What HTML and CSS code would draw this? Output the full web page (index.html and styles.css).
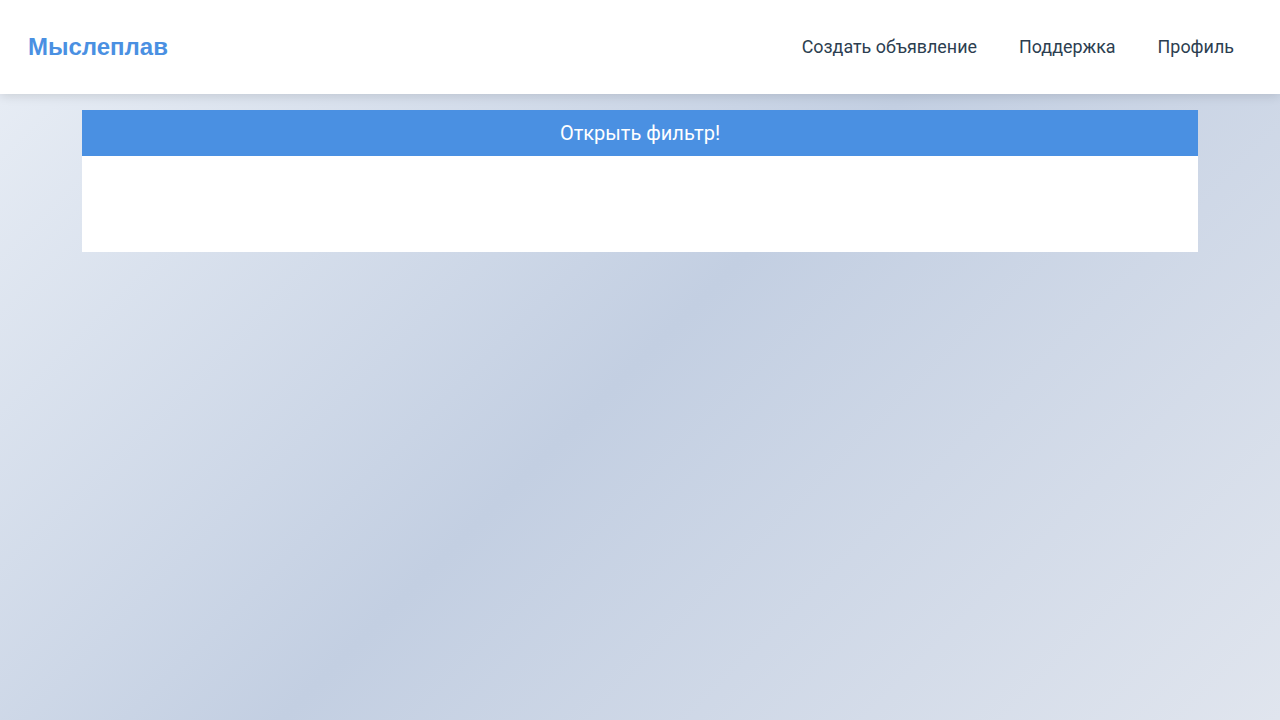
FILE: index.html
```html
<!DOCTYPE html>
<html lang="ru">
<head>
<meta charset="utf-8">
<title>Мыслеплав</title>
<link rel="stylesheet" href="styles.css">
</head>
<body>
<header class="header">
  <a class="logo" href="#">Мыслеплав</a>
  <nav class="nav">
    <a class="nav-link" href="#">Создать объявление</a>
    <a class="nav-link" href="#">Поддержка</a>
    <a class="nav-link" href="#">Профиль</a>
  </nav>
</header>
<main class="main">
  <section class="filter">
    <button class="filter-toggle" type="button">Открыть фильтр!</button>
    <div class="filter-body"></div>
  </section>
</main>
</body>
</html>
```
FILE: styles.css
```css
* { box-sizing: border-box; }
html, body { height: 100%; }
body {
  margin: 0;
  font-family: Roboto, "Noto Sans", sans-serif;
  background: linear-gradient(135deg, #eaeff6 0%, #c3cfe2 50%, #e0e5ee 100%);
  min-height: 720px;
}
.header {
  height: 94px;
  background: #fff;
  display: flex;
  align-items: center;
  justify-content: space-between;
  padding: 0 25px 0 28px;
  box-shadow: 0 2px 10px rgba(0, 0, 0, 0.12);
  position: relative;
}
.logo {
  font-family: "Liberation Sans", Arial, sans-serif;
  font-weight: bold;
  font-size: 24px;
  color: #4a90e2;
  text-decoration: none;
}
.nav { display: flex; }
.nav-link {
  font-size: 17.9px;
  color: #2c3e50;
  text-decoration: none;
  padding: 7px 21px 9px;
}
.main {
  max-width: 1116px;
  margin: 16px auto 0;
}
.filter-toggle {
  display: block;
  width: 100%;
  height: 46px;
  border: none;
  background: #4a90e2;
  color: #fff;
  font-family: Roboto, "Noto Sans", sans-serif;
  font-size: 20px;
  cursor: pointer;
}
.filter-body {
  height: 96px;
  background: #fff;
}
```
